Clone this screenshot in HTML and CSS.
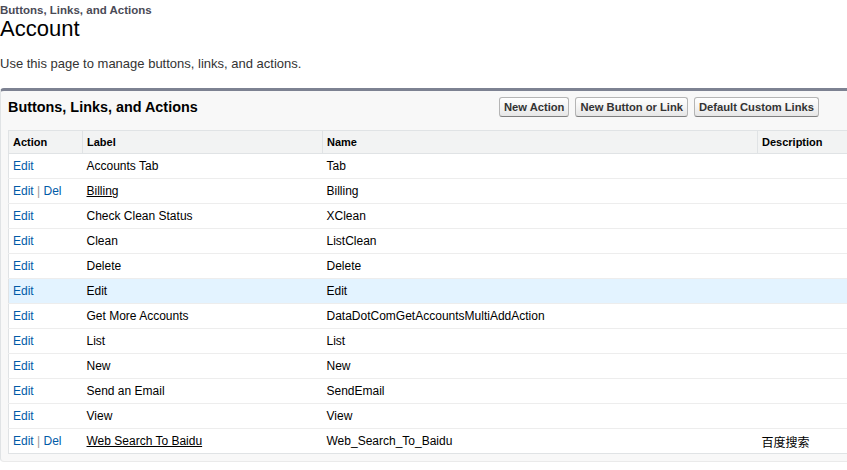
FILE: index.html
```html
<!DOCTYPE html>
<html>
<head>
<meta charset="utf-8">
<link rel="stylesheet" href="styles.css">
</head>
<body>
<div class="page-head">
  <div class="crumb">Buttons, Links, and Actions</div>
  <h1 class="title">Account</h1>
</div>
<p class="intro">Use this page to manage buttons, links, and actions.</p>
<div class="panel">
  <div class="panel-head">
    <h2 class="panel-title">Buttons, Links, and Actions</h2>
    <div class="btns">
      <button class="btn">New Action</button>
      <button class="btn">New Button or Link</button>
      <button class="btn">Default Custom Links</button>
    </div>
  </div>
  <table class="list">
    <colgroup>
      <col class="c-action"><col class="c-label"><col class="c-name"><col class="c-desc">
    </colgroup>
    <thead>
      <tr><th>Action</th><th>Label</th><th>Name</th><th>Description</th></tr>
    </thead>
    <tbody>
      <tr><td><a class="lnk">Edit</a></td><td>Accounts Tab</td><td>Tab</td><td></td></tr>
      <tr><td><a class="lnk">Edit</a> <span class="sep">|</span> <a class="lnk">Del</a></td><td><a class="u">Billing</a></td><td>Billing</td><td></td></tr>
      <tr><td><a class="lnk">Edit</a></td><td>Check Clean Status</td><td>XClean</td><td></td></tr>
      <tr><td><a class="lnk">Edit</a></td><td>Clean</td><td>ListClean</td><td></td></tr>
      <tr><td><a class="lnk">Edit</a></td><td>Delete</td><td>Delete</td><td></td></tr>
      <tr class="hl"><td><a class="lnk">Edit</a></td><td>Edit</td><td>Edit</td><td></td></tr>
      <tr><td><a class="lnk">Edit</a></td><td>Get More Accounts</td><td>DataDotComGetAccountsMultiAddAction</td><td></td></tr>
      <tr><td><a class="lnk">Edit</a></td><td>List</td><td>List</td><td></td></tr>
      <tr><td><a class="lnk">Edit</a></td><td>New</td><td>New</td><td></td></tr>
      <tr><td><a class="lnk">Edit</a></td><td>Send an Email</td><td>SendEmail</td><td></td></tr>
      <tr><td><a class="lnk">Edit</a></td><td>View</td><td>View</td><td></td></tr>
      <tr><td><a class="lnk">Edit</a> <span class="sep">|</span> <a class="lnk">Del</a></td><td><a class="u">Web Search To Baidu</a></td><td>Web_Search_To_Baidu</td><td class="cjk">百度搜索</td></tr>
    </tbody>
  </table>
</div>
</body>
</html>
```
FILE: styles.css
```css
html, body {
  margin: 0;
  padding: 0;
  background: #fff;
  font-family: "Liberation Sans", Arial, sans-serif;
  color: #000;
}
.page-head {
  padding-top: 4px;
}
.crumb {
  font-size: 11.5px;
  font-weight: bold;
  color: #4a4a56;
  line-height: 13px;
}
.title {
  margin: 0;
  font-size: 22px;
  font-weight: normal;
  line-height: 24px;
  color: #000;
}
.intro {
  margin: 0;
  padding-top: 15px;
  font-size: 13px;
  line-height: 16px;
  color: #333;
}
.panel {
  margin-top: 16px;
  border-top: 3px solid #7d8292;
  border-left: 1px solid #e0e3e5;
  border-bottom: 1px solid #eaeaea;
  border-radius: 4px 0 0 4px;
  background: #f8f8f8;
  padding: 0 0 7px 7px;
}
.panel-head {
  display: flex;
  align-items: center;
  height: 32px;
  margin-bottom: 7px;
  padding-right: 28px;
}
.panel-title {
  margin: 0;
  flex: 1;
  font-size: 14.4px;
  font-weight: bold;
  color: #000;
  line-height: 16px;
}
.btns {
  display: flex;
  gap: 6px;
}
.btn {
  font-family: "Liberation Sans", Arial, sans-serif;
  font-size: 11.2px;
  font-weight: bold;
  color: #333;
  height: 20px;
  padding: 0 4px;
  border: 1px solid #b5b5b5;
  border-bottom-color: #7f7f7f;
  border-radius: 3px;
  background: linear-gradient(#ffffff, #f4f4f4 50%, #e6e6e6);
}
.list {
  width: 100%;
  border-collapse: collapse;
  background: #fff;
  border: 1px solid #e0e3e5;
  border-right: none;
  font-size: 12px;
}
.c-action { width: 74px; }
.c-label { width: 240px; }
.c-name { width: 435px; }
.list th {
  background: #f2f3f3;
  font-size: 11px;
  font-weight: bold;
  color: #000;
  text-align: left;
  height: 22px;
  padding: 0 4px;
  border-bottom: 1px solid #e0e3e5;
  border-left: 1px solid #e0e3e5;
}
.list th:first-child { border-left: none; }
.list td {
  height: 24px;
  padding: 0 4px;
  border-bottom: 1px solid #ededed;
  color: #000;
  vertical-align: middle;
}
.list tr:last-child td { border-bottom: none; }
.list tr.hl td { background: #e3f3ff; }
.lnk {
  color: #015ba7;
  text-decoration: none;
}
.sep { color: #999; }
.u {
  color: #000;
  text-decoration: underline;
}
.cjk {
  font-family: "Noto Sans CJK SC", "Liberation Sans", sans-serif;
  font-size: 12px;
}
```
